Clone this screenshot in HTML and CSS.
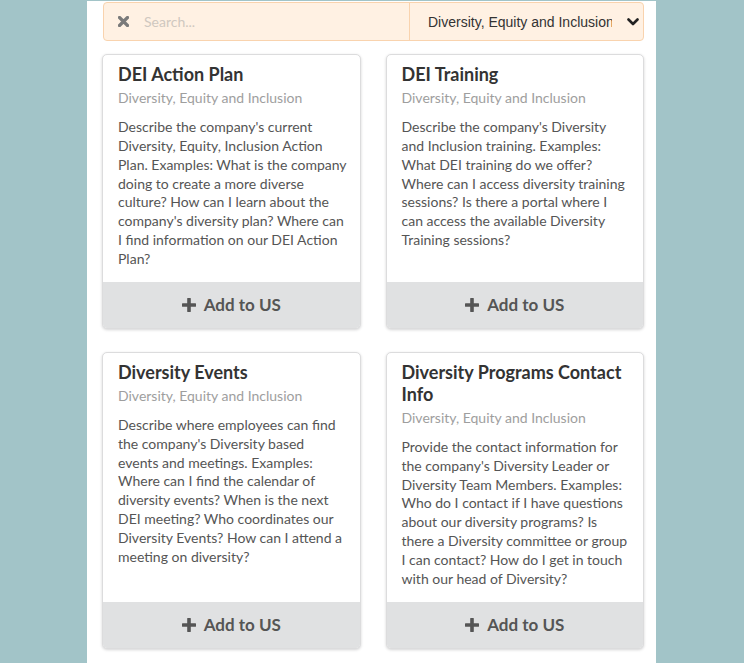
FILE: index.html
```html
<!DOCTYPE html>
<html>
<head>
<meta charset="utf-8">
<link rel="stylesheet" href="styles.css">
</head>
<body>
<div class="panel">
  <div class="searchbar">
    <div class="search">
      <svg class="x-icon" width="11" height="11" viewBox="0 0 11 11"><path d="M1.5 1.5 L9.5 9.5 M9.5 1.5 L1.5 9.5" stroke="#7a7a7a" stroke-width="3.2" stroke-linecap="round"/></svg>
      <span class="placeholder">Search...</span>
    </div>
    <div class="select">
      <span class="select-text">Diversity, Equity and Inclusion</span>
      <svg class="chev" width="12" height="8" viewBox="0 0 12 8"><path d="M1.5 1.5 L6 6 L10.5 1.5" fill="none" stroke="#222" stroke-width="2.6" stroke-linecap="round" stroke-linejoin="round"/></svg>
    </div>
  </div>
  <div class="cards">
    <div class="card">
      <div class="content">
        <div class="header">DEI Action Plan</div>
        <div class="meta">Diversity, Equity and Inclusion</div>
        <div class="desc">Describe the company's current Diversity, Equity, Inclusion Action Plan. Examples: What is the company doing to create a more diverse culture? How can I learn about the company's diversity plan? Where can I find information on our DEI Action Plan?</div>
      </div>
      <div class="btn"><svg class="plus" width="14" height="14" viewBox="0 0 14 14"><path d="M7 1 V13 M1 7 H13" stroke="#555" stroke-width="3.6" stroke-linecap="round"/></svg>Add to US</div>
    </div>
    <div class="card">
      <div class="content">
        <div class="header">DEI Training</div>
        <div class="meta">Diversity, Equity and Inclusion</div>
        <div class="desc">Describe the company's Diversity and Inclusion training. Examples: What DEI training do we offer? Where can I access diversity training sessions? Is there a portal where I can access the available Diversity Training sessions?</div>
      </div>
      <div class="btn"><svg class="plus" width="14" height="14" viewBox="0 0 14 14"><path d="M7 1 V13 M1 7 H13" stroke="#555" stroke-width="3.6" stroke-linecap="round"/></svg>Add to US</div>
    </div>
    <div class="card">
      <div class="content">
        <div class="header">Diversity Events</div>
        <div class="meta">Diversity, Equity and Inclusion</div>
        <div class="desc">Describe where employees can find the company's Diversity based events and meetings. Examples: Where can I find the calendar of diversity events? When is the next DEI meeting? Who coordinates our Diversity Events? How can I attend a meeting on diversity?</div>
      </div>
      <div class="btn"><svg class="plus" width="14" height="14" viewBox="0 0 14 14"><path d="M7 1 V13 M1 7 H13" stroke="#555" stroke-width="3.6" stroke-linecap="round"/></svg>Add to US</div>
    </div>
    <div class="card">
      <div class="content">
        <div class="header">Diversity Programs Contact Info</div>
        <div class="meta">Diversity, Equity and Inclusion</div>
        <div class="desc">Provide the contact information for the company's Diversity Leader or Diversity Team Members. Examples: Who do I contact if I have questions about our diversity programs? Is there a Diversity committee or group I can contact? How do I get in touch with our head of Diversity?</div>
      </div>
      <div class="btn"><svg class="plus" width="14" height="14" viewBox="0 0 14 14"><path d="M7 1 V13 M1 7 H13" stroke="#555" stroke-width="3.6" stroke-linecap="round"/></svg>Add to US</div>
    </div>
  </div>
</div>
</body>
</html>
```
FILE: styles.css
```css
html, body {
  margin: 0;
  padding: 0;
  background: #a2c4c8;
  height: 100%;
}
body {
  font-family: Lato, "Noto Sans", sans-serif;
  overflow: hidden;
}
.panel {
  margin: 1px 0 0 87px;
  width: 569px;
  min-height: 700px;
  background: #fff;
  box-sizing: border-box;
  padding: 1px 12px 0 15px;
}
.searchbar {
  margin-left: 1px;
  height: 39px;
  box-sizing: border-box;
  border: 1px solid #f9d3ae;
  border-radius: 4px;
  background: #fff1e3;
  display: flex;
}
.search {
  flex: 1;
  display: flex;
  align-items: center;
  padding-left: 14px;
}
.x-icon {
  display: block;
  margin-right: 15px;
}
.placeholder {
  font-size: 14px;
  color: #cfc8c0;
}
.select {
  width: 234px;
  box-sizing: border-box;
  border-left: 1px solid #f9d3ae;
  display: flex;
  align-items: center;
  padding-left: 18px;
  padding-right: 4px;
}
.select-text {
  font-family: "Liberation Sans", Arial, sans-serif;
  font-size: 14px;
  color: #333;
  width: 184px;
  white-space: nowrap;
  overflow: hidden;
  text-overflow: clip;
}
.chev {
  display: block;
  margin-left: 15px;
}
.cards {
  margin-top: 13px;
  display: grid;
  grid-template-columns: 1fr 1fr;
  column-gap: 25px;
  row-gap: 23px;
}
.card {
  display: flex;
  flex-direction: column;
  border: 1px solid #dcdcdd;
  border-radius: 5px;
  box-shadow: 0 1px 3px 0 #d4d4d5;
  background: #fff;
}
.content {
  flex: 1;
  padding: 8px 13px 13px 15px;
}
.header {
  font-size: 18px;
  font-weight: 700;
  line-height: 22px;
  color: #333;
}
.meta {
  margin-top: 3px;
  font-size: 14px;
  line-height: 20px;
  color: #9e9e9e;
}
.desc {
  margin-top: 10px;
  font-size: 14px;
  line-height: 18.86px;
  color: #555;
}
.btn {
  height: 46px;
  background: #e0e1e2;
  border-radius: 0 0 4px 4px;
  display: flex;
  align-items: center;
  justify-content: center;
  font-size: 17px;
  font-weight: 700;
  color: #555;
}
.plus {
  display: block;
  margin-right: 8px;
}
```
